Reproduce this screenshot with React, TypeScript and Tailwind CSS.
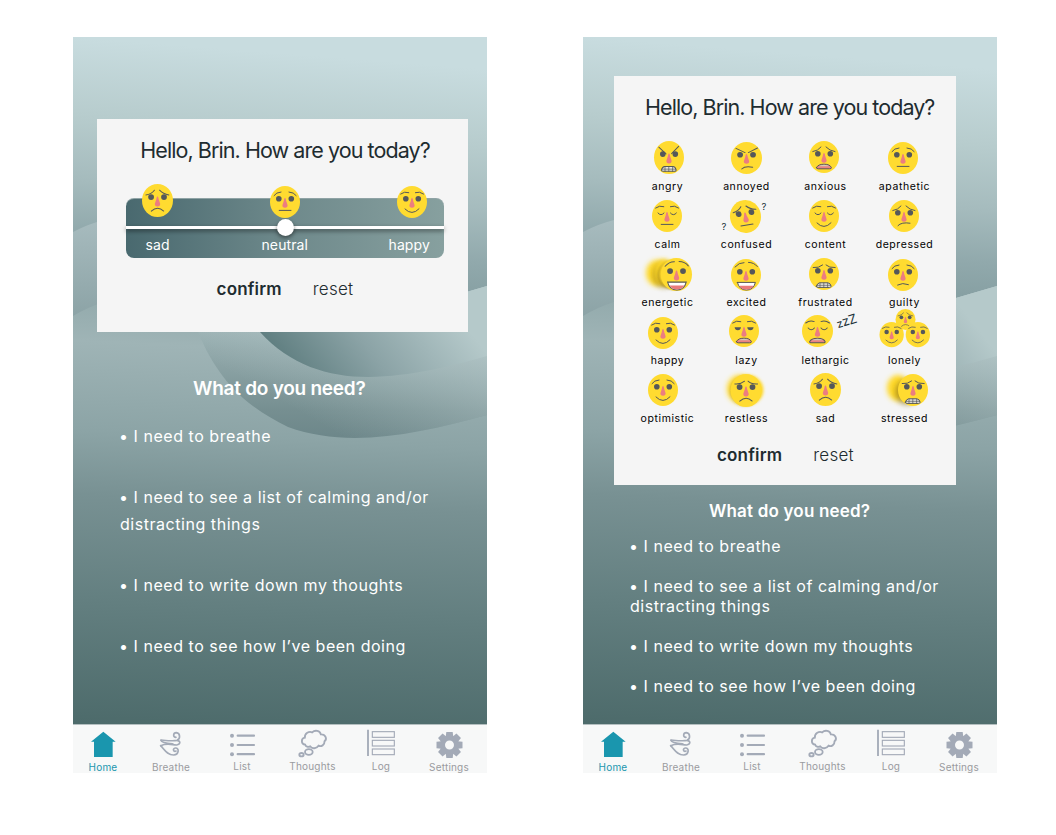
import { useId, type ReactNode } from "react";

const INK = "#55585a";

type Brow = "sad" | "raised" | "soft" | "angry" | "annoyed" | "worried" | "high";
type Eye = "open" | "closed" | "half";
type Mouth = "frown" | "flat" | "smile" | "grit" | "smirk" | "gape" | "laugh" | "uneasy" | "slant";

const brows: Record<Brow, string> = {
  sad: "M3.8 10.6Q9.2 9.8 12 6M17 6Q20.5 9.8 26 10.6",
  raised: "M4 9.6Q6.2 6.2 11 6M19 6Q23.8 6.2 26.2 9.6",
  soft: "M3.6 8Q7.5 5 11.8 6.6M18.4 6.6Q22.5 5 26.6 8",
  high: "M4 8Q8 3.4 13 3.6M17.5 3.4Q23 3.4 26.4 7.6",
  angry: "M4.8 6L12 12.6M24.6 5.2L17.6 12.2",
  annoyed: "M4.8 6.4L13.6 10.6M16.8 10.6L25.6 6",
  worried: "M4.2 9.6Q9.8 10.2 13.6 7M17 7Q20 10 26.2 9.6",
};

const mouths: Record<Mouth, ReactNode> = {
  frown: <path d="M9 26.4Q15 20.8 21 26.2" />,
  flat: <path d="M9.2 24.4H21" />,
  smile: <path d="M8 23Q15 30.2 22 22.8" />,
  smirk: <path d="M10.4 27Q13.5 23.6 21 25.2" />,
  slant: <path d="M9 25.6Q12.5 21.8 21 23.2" />,
  uneasy: <path d="M9.6 26Q14.5 23.2 20.4 25.6" />,
  grit: (
    <g>
      <path d="M7.4 28.2Q8.4 25 10.6 24.8H18.8Q21.4 25 22.2 28.2Q22 29.4 20.6 29.4H9Q7.4 29.4 7.4 28.2Z" fill="#e9e7df" />
      <path d="M11 25V29.4M14.8 25V29.4M18.6 25V29.4M8 27.3H21.6" strokeWidth=".7" />
    </g>
  ),
  gape: (
    <g>
      <path d="M7.4 26.6Q9 23.2 15 23.2T22.4 26.6Q22.6 27.8 20.6 27.8H9.2Q7.2 27.8 7.4 26.6Z" fill="#ea8282" />
      <path d="M9.4 25.2Q11.6 23.7 15 23.7T20.6 25.2Z" fill="#cfccb6" stroke="none" />
    </g>
  ),
  laugh: (
    <g>
      <path d="M6.4 23.4H24.4Q22.6 31 15.4 31T6.4 23.4Z" fill="#fff" />
      <path d="M8.2 26.7H22.8Q20.2 30.6 15.4 30.6T8.2 26.7Z" fill="#ea7b7b" stroke="none" />
    </g>
  ),
};

type FeatureSpec = { brow: Brow; eye?: Eye; mouth: Mouth };

function Features({ brow, eye = "open", mouth }: FeatureSpec) {
  return (
    <g>
      <ellipse cx="15" cy="16" rx="15" ry="16" fill="#ffdb30" />
      <g fill="none" stroke={INK} strokeWidth="1" strokeLinecap="round">
        <path d={brows[brow]} />
        {eye === "closed" && <path d="M6 13Q9 16.6 12 13M18.4 13Q21.4 16.6 24.4 13" />}
        {mouths[mouth]}
      </g>
      {eye === "open" && (
        <g fill={INK}>
          <circle cx="8.8" cy="12.7" r="2.8" />
          <circle cx="21.3" cy="12.7" r="2.8" />
        </g>
      )}
      {eye === "half" && (
        <path d="M5.6 12.2H12Q11.6 15.2 8.8 15.2T5.6 12.2ZM18.2 12.2H24.6Q24.2 15.2 21.4 15.2T18.2 12.2Z" fill={INK} />
      )}
      <path d="M15 11.8Q15.8 11.9 16.3 15.2L17.6 19.2Q17.8 21.6 15 21.8Q12.2 21.6 12.4 19.2L13.7 15.2Q14.2 11.9 15 11.8Z" fill="#ec7d80" />
    </g>
  );
}

type FaceSpec = FeatureSpec & { x: number; y: number; w?: number; h?: number; rot?: number };

function Face({ x, y, w = 30, h = 32, rot = 0, ...rest }: FaceSpec) {
  return (
    <g transform={`translate(${x} ${y}) scale(${w / 30} ${h / 32}) rotate(${rot} 15 16)`}>
      <Features {...rest} />
    </g>
  );
}

type BlobSpec = { cx: number; cy: number; rx: number; ry: number; blur: number; fill?: string; opacity?: number };

function Blob({ blur, fill = "#ffd92c", ...shape }: BlobSpec) {
  const id = useId();
  return (
    <g>
      <filter id={id} x="-60%" y="-60%" width="220%" height="220%">
        <feGaussianBlur stdDeviation={blur} />
      </filter>
      <ellipse {...shape} fill={fill} filter={`url(#${id})`} />
    </g>
  );
}

const SHADE = "#8f7414";

const moods: { name: string; art: ReactNode }[] = [
  { name: "angry", art: <Face x={26} y={5} h={33} brow="angry" mouth="grit" /> },
  { name: "annoyed", art: <Face x={24} y={6} w={31} brow="annoyed" mouth="smirk" /> },
  { name: "anxious", art: <Face x={23} y={5} brow="sad" mouth="gape" /> },
  { name: "apathetic", art: <Face x={23} y={6} brow="raised" mouth="flat" /> },
  { name: "calm", art: <Face x={24} y={6} brow="soft" eye="closed" mouth="flat" /> },
  {
    name: "confused",
    art: (
      <g>
        <Face x={23} y={6} w={31} h={33} rot={-9} brow="sad" mouth="flat" />
        <text x="14.5" y="36" className="fill-[#22333a] text-[9.5px]">?</text>
        <text x="54.5" y="15.5" className="fill-[#22333a] text-[9.5px]">?</text>
      </g>
    ),
  },
  { name: "content", art: <Face x={23} y={6} brow="soft" eye="closed" mouth="smile" /> },
  { name: "depressed", art: <Face x={24} y={6} brow="sad" mouth="slant" /> },
  {
    name: "energetic",
    art: (
      <g>
        <Blob cx={29} cy={21} rx={11} ry={13} blur={2.6} />
        <Blob cx={36} cy={23} rx={11} ry={13} blur={2.4} fill={SHADE} opacity={0.6} />
        <Blob cx={36} cy={20} rx={9} ry={13} blur={2} />
        <Blob cx={45} cy={23} rx={15.5} ry={14.5} blur={1} fill={SHADE} opacity={0.6} />
        <Blob cx={46} cy={22} rx={14.5} ry={14.5} blur={0.8} />
        <Face x={33} y={6} w={31} h={33} brow="high" mouth="laugh" />
      </g>
    ),
  },
  { name: "excited", art: <Face x={24} y={7} brow="high" mouth="laugh" /> },
  { name: "frustrated", art: <Face x={23} y={6} brow="worried" mouth="grit" /> },
  { name: "guilty", art: <Face x={23} y={7} brow="raised" mouth="uneasy" /> },
  { name: "happy", art: <Face x={20} y={7} brow="soft" mouth="smile" /> },
  { name: "lazy", art: <Face x={22} y={5} brow="soft" eye="half" mouth="gape" /> },
  {
    name: "lethargic",
    art: (
      <g>
        <Face x={16} y={5} w={31} brow="soft" eye="closed" mouth="gape" />
        <g transform="translate(53 18) rotate(-17)" className="fill-[#22333a]">
          <text x="-1" y="0" className="text-[11px]">z</text>
          <text x="4.8" y="0" className="text-[13px]">z</text>
          <text x="11.5" y="0" className="text-[13px]">Z</text>
        </g>
      </g>
    ),
  },
  {
    name: "lonely",
    art: (
      <g>
        <Face x={30.5} y={-1} w={20} h={21} brow="sad" mouth="frown" />
        <Face x={14.5} y={12} w={24.3} h={25.3} brow="soft" mouth="smile" />
        <Face x={40.7} y={12} w={24.3} h={25.3} brow="soft" mouth="smile" />
      </g>
    ),
  },
  { name: "optimistic", art: <Face x={20} y={6} brow="raised" mouth="smile" /> },
  {
    name: "restless",
    art: (
      <g>
        <Blob cx={33} cy={21} rx={13} ry={14} blur={2.4} />
        <Blob cx={38} cy={23} rx={15} ry={15} blur={1.8} fill={SHADE} opacity={0.4} />
        <Blob cx={41} cy={22} rx={15.5} ry={15} blur={1.6} />
        <Face x={23.5} y={6} w={31} h={33} brow="worried" mouth="frown" />
      </g>
    ),
  },
  { name: "sad", art: <Face x={24} y={5} w={31} h={33} brow="sad" mouth="frown" /> },
  {
    name: "stressed",
    art: (
      <g>
        <Blob cx={33} cy={20} rx={11} ry={13} blur={2.8} />
        <Blob cx={42} cy={24} rx={12} ry={13} blur={2.4} fill={SHADE} opacity={0.6} />
        <Face x={33} y={6} brow="worried" mouth="grit" />
      </g>
    ),
  },
];

function Backdrop() {
  const id = useId();
  const u = (n: string) => `url(#${id}${n})`;
  return (
    <svg className="absolute inset-0" width="414" height="736" viewBox="0 0 414 736" aria-hidden="true">
      <defs>
        <linearGradient id={id + "sky"} gradientUnits="userSpaceOnUse" x1="0" y1="0" x2="-20" y2="257">
          <stop offset="0" stopColor="#c8dcdf" />
          <stop offset=".3" stopColor="#b7cccd" />
          <stop offset=".55" stopColor="#a5bbbd" />
          <stop offset=".75" stopColor="#91a9ac" />
          <stop offset="1" stopColor="#7e989b" />
        </linearGradient>
        <linearGradient id={id + "hill"} gradientUnits="userSpaceOnUse" x1="0" y1="180" x2="0" y2="280">
          <stop offset="0" stopColor="#a8bcbf" />
          <stop offset="1" stopColor="#8ca3a6" />
        </linearGradient>
        <linearGradient id={id + "ground"} gradientUnits="userSpaceOnUse" x1="0" y1="265" x2="-20" y2="690">
          <stop offset="0" stopColor="#94abad" />
          <stop offset=".09" stopColor="#9fb4b6" />
          <stop offset=".3" stopColor="#8ca4a6" />
          <stop offset=".45" stopColor="#789193" />
          <stop offset=".7" stopColor="#637f80" />
          <stop offset="1" stopColor="#4c6a6a" />
        </linearGradient>
        <linearGradient id={id + "band"} gradientUnits="userSpaceOnUse" x1="0" y1="290" x2="0" y2="400">
          <stop offset="0" stopColor="#9db3b5" />
          <stop offset=".75" stopColor="#768f91" />
          <stop offset="1" stopColor="#6d878a" />
        </linearGradient>
        <linearGradient id={id + "sheen"} gradientUnits="userSpaceOnUse" x1="270" y1="400" x2="345" y2="270">
          <stop offset="0" stopColor="#cfdfe0" stopOpacity="0" />
          <stop offset="1" stopColor="#cfdfe0" stopOpacity=".5" />
        </linearGradient>
        <linearGradient id={id + "inner"} gradientUnits="userSpaceOnUse" x1="220" y1="338" x2="350" y2="235">
          <stop offset="0" stopColor="#5f7e80" />
          <stop offset=".45" stopColor="#8ba3a6" />
          <stop offset="1" stopColor="#b5c9ca" />
        </linearGradient>
      </defs>
      <rect width="414" height="736" fill={u("sky")} />
      <path d="M0 195Q15 187 31 183L200 150V300H0Z" fill={u("hill")} />
      <path d="M0 279Q15 270 31 265L200 230L300 392L414 370V736H0Z" fill={u("ground")} />
      <path d="M110 261L125 295C145 343 172 369 215 390C275 412 345 397 414 378V249L373 261Z" fill={u("band")} />
      <path d="M110 261L125 295C145 343 172 369 215 390C275 412 345 397 414 378V249L373 261Z" fill={u("sheen")} />
      <path d="M165 261L187 295C217 328 255 340 295 340C340 339 375 330 414 319V249L373 261Z" fill={u("inner")} />
    </svg>
  );
}

const gearTeeth = [0, 45, 90, 135, 180, 225, 270, 315];

const tabs: { label: string; cell: string; view: string; text: string; art: ReactNode }[] = [
  {
    label: "Home",
    cell: "w-[60px] text-[#1a96ae]",
    view: "30 30 120 96",
    text: "mt-[2px]",
    art: <path d="M91 50L128 80H119V126H63V80H54Z" fill="currentColor" />,
  },
  {
    label: "Breathe",
    cell: "w-[76px] text-[#9a9b9f]",
    view: "234 30 120 96",
    text: "mt-[2px]",
    art: (
      <g fill="none" stroke="#a3aab7" strokeWidth="5" strokeLinecap="round" strokeLinejoin="round">
        <path d="M264 75C285 77 300 79 312 76C323 72 322 54 310 53C300 53 299 67 309 67" />
        <path d="M264 76C264 84 290 86 300 87M263 92C285 82 300 91 311 90C323 88 323 78 314 77" />
        <path d="M263 92C275 104 282 120 302 120C318 119 320 98 307 99C297 101 302 112 309 108" />
      </g>
    ),
  },
  {
    label: "List",
    cell: "w-[66px] text-[#9a9b9f]",
    view: "447 30 120 96",
    text: "mt-px",
    art: (
      <g fill="#a3aab7" stroke="#a3aab7" strokeLinecap="round" strokeWidth="6.5">
        {[62, 90, 117.5].map((y) => (
          <g key={y}>
            <circle cx="477" cy={y} r="6" stroke="none" />
            <path d={`M494 ${y}H543`} />
          </g>
        ))}
      </g>
    ),
  },
  {
    label: "Thoughts",
    cell: "w-[75px] text-[#9a9b9f]",
    view: "37.5 30 120 96",
    text: "mt-px",
    art: (
      <g fill="none" stroke="#a3aab7" strokeWidth="5.5">
        <path d="M74 89C61 87 61 70 73 68C72 54 86 48 95 52C103 44 119 46 121 58C135 57 141 72 132 79C133 90 122 96 114 92C108 101 95 103 89 94C83 97 75 95 74 89Z" />
        <ellipse cx="85" cy="111" rx="11.5" ry="8.5" />
        <ellipse cx="63" cy="119" rx="6.5" ry="5" />
      </g>
    ),
  },
  {
    label: "Log",
    cell: "w-[62px] text-[#9a9b9f]",
    view: "243 30 120 96",
    text: "mt-px",
    art: (
      <g fill="none" stroke="#a3aab7" strokeWidth="3.4">
        <path d="M264 44V123" strokeWidth="5.5" />
        <rect x="277" y="50" width="66" height="17" />
        <rect x="277" y="76" width="66" height="17" />
        <rect x="277" y="102" width="66" height="17" />
      </g>
    ),
  },
  {
    label: "Settings",
    cell: "w-[74px] text-[#9a9b9f]",
    view: "447 30 120 96",
    text: "mt-[2px]",
    art: (
      <g>
        <circle cx="508.5" cy="90" r="21" fill="none" stroke="#a3aab7" strokeWidth="15" />
        {gearTeeth.map((a) => (
          <path key={a} d="M497 66L499 51H518L520 66Z" fill="#a3aab7" transform={`rotate(${a} 508.5 90)`} />
        ))}
      </g>
    ),
  },
];

function TabBar() {
  return (
    <nav className="relative mt-auto flex h-[49px] shrink-0 border-t border-[#b4bfc0] bg-[#f7f8f8]">
      {tabs.map((t) => (
        <a key={t.label} className={`flex flex-col items-center ${t.cell}`}>
          <svg width="40" height="32" viewBox={t.view} className="shrink-0 overflow-visible" aria-hidden="true">
            {t.art}
          </svg>
          <span className={`text-[10px] leading-4 tracking-[0.2px] ${t.text}`}>{t.label}</span>
        </a>
      ))}
    </nav>
  );
}

function Phone({ children }: { children: ReactNode }) {
  return (
    <section className="relative flex h-[736px] w-[414px] shrink-0 flex-col overflow-hidden">
      <Backdrop />
      {children}
      <TabBar />
    </section>
  );
}

function Greeting() {
  return (
    <h1 className="text-[21.5px] leading-7 tracking-[-0.93px] whitespace-nowrap text-[#1e2c30]">
      Hello, Brin. How are you today?
    </h1>
  );
}

function Actions() {
  return (
    <div className="flex items-center gap-[31px] text-[17px] leading-6 text-[#1e2c30]">
      <button className="font-semibold tracking-[0.17px]">confirm</button>
      <button className="font-light tracking-[0.25px]">reset</button>
    </div>
  );
}

const needs = [
  "I need to breathe",
  "I need to see a list of calming and/or distracting things",
  "I need to write down my thoughts",
  "I need to see how I’ve been doing",
];

function Needs({ className }: { className: string }) {
  return (
    <ul className={`relative flex w-[330px] flex-col text-base tracking-[0.54px] text-white ${className}`}>
      {needs.map((n) => (
        <li key={n} className="-indent-px">{`• ${n}`}</li>
      ))}
    </ul>
  );
}

export default function App() {
  return (
    <main className="flex h-[835px] w-[1056px] gap-24 overflow-hidden bg-white pt-[37px] pl-[73px] font-['Inter','Liberation_Sans',sans-serif]">
      <Phone>
        <div className="relative mt-[82px] ml-6 flex h-[213px] w-[371px] flex-col items-center bg-[#f5f5f5] pt-[17px] pl-[5px]">
          <Greeting />
          <div className="relative mt-[34px] -ml-px flex h-[60px] w-[318px] items-end rounded-lg border-t border-[#8fa3a5] bg-linear-to-r from-[#49696f] via-[#6e898b] to-[#87a09f] pb-0.5 pl-5 text-sm leading-[22px] tracking-[0.1px] text-white">
            <div className="absolute top-[27px] left-0 h-[3px] w-[318px] bg-white shadow-[0_2px_4px_rgba(0,0,0,0.5)]" />
            <div className="absolute top-[20px] left-[151px] size-[17px] rounded-full bg-white shadow-[0_2px_4px_rgba(0,0,0,0.5)]" />
            <svg className="absolute -top-[15px] left-0 overflow-visible" width="318" height="36" aria-hidden="true">
              <Face x={16} y={0} w={31} h={33} brow="sad" mouth="frown" />
              <Face x={144} y={2} brow="raised" mouth="flat" />
              <Face x={271} y={2} brow="soft" mouth="smile" />
            </svg>
            <span className="w-[116px]">sad</span>
            <span className="w-[127px]">neutral</span>
            <span>happy</span>
          </div>
          <div className="mt-[19px]">
            <Actions />
          </div>
        </div>
        <h2 className="relative mt-[45px] ml-[120px] text-[19px] leading-6 font-semibold tracking-[-0.25px] whitespace-nowrap text-white">
          What do you need?
        </h2>
        <Needs className="mt-[22px] ml-[47px] gap-[34px] leading-[27px]" />
      </Phone>
      <Phone>
        <div className="relative mt-[39px] ml-[31px] h-[409px] w-[342px] bg-[#f5f5f5] pt-[17px]">
          <div className="ml-[31px]">
            <Greeting />
          </div>
          <div className="mt-[15px] ml-[14px] grid w-[316px] grid-cols-4">
            {moods.map((m) => (
              <div key={m.name} className="flex h-[58px] flex-col items-center">
                <svg width="79" height="43" viewBox="0 0 79 43" className="shrink-0 overflow-visible" aria-hidden="true">
                  {m.art}
                </svg>
                <span className="text-[10.5px] leading-[15px] tracking-[0.58px] text-black">{m.name}</span>
              </div>
            ))}
          </div>
          <div className="mt-[17px] ml-[103px]">
            <Actions />
          </div>
        </div>
        <h2 className="relative mt-[14px] ml-[126px] text-[17px] leading-6 font-semibold tracking-[0.18px] whitespace-nowrap text-white">
          What do you need?
        </h2>
        <Needs className="mt-[13px] ml-[47px] gap-5 leading-5" />
      </Phone>
    </main>
  );
}
